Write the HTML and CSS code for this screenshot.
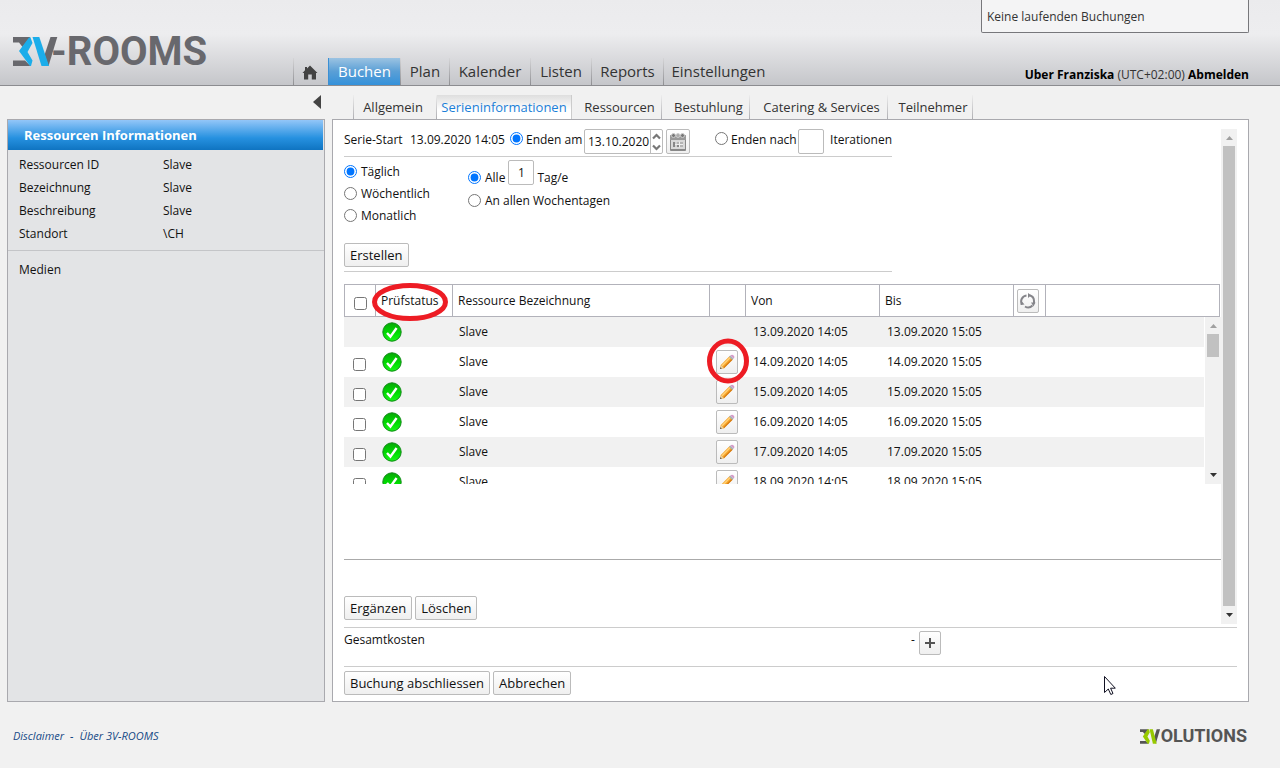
FILE: index.html
```html
<!DOCTYPE html>
<html lang="de">
<head>
<meta charset="utf-8">
<title>3V-ROOMS</title>
<link rel="stylesheet" href="styles.css">
</head>
<body>
<svg class="sprite" aria-hidden="true">
  <defs>
    <linearGradient id="green" x1="0" y1="0" x2="0" y2="1"><stop offset="0" stop-color="#08a808"/><stop offset=".55" stop-color="#00dc00"/><stop offset="1" stop-color="#18f818"/></linearGradient>
  </defs>
  <symbol id="ok" viewBox="0 0 20 20"><circle cx="10" cy="10" r="9.2" fill="url(#green)" stroke="#118a18" stroke-width="1"/><path d="M5 11l3.4 3.6L14.6 6" fill="none" stroke="#fff" stroke-width="2.4"/></symbol>
  <symbol id="pencil" viewBox="0 0 16 16"><path d="M1 15l.8-4L11 1.800l3.200 3L5 14.200z" fill="#f7a428"/><path d="M2.500 11.300L11 2.800l1 1-8.500 8.500z" fill="#ffd27a"/><path d="M4.200 13.400l8.600-8.600.9.900L5 14.200z" fill="#d67c14"/><path d="M1 15l.8-4 3.200 3.200z" fill="#e9cf9f"/><path d="M1 15l.4-1.800 1.400 1.400z" fill="#444"/><path d="M10 2.800l1.400-1.300L14.600 4.600 13.200 6z" fill="#a9b3b8"/><path d="M11.400 1.500Q13 0 14.600 1.400T14.600 4.600z" fill="#d59bc9"/></symbol>
  <symbol id="up" viewBox="0 0 7 4"><path d="M0 4L3.500 0 7 4z"/></symbol>
  <symbol id="down" viewBox="0 0 7 4"><path d="M0 0h7L3.500 4z"/></symbol>
</svg>

<header class="top">
  <a class="logo" href="#"><svg class="logo-mark" viewBox="0 0 45 29" aria-hidden="true"><path d="M0 0h17.500L9.500 10 6 5.500H0zM0 23.500h12l5.500 5.500H0z" fill="#68686d"/><path d="M16 .5h1.500l2 5.500-5 9 5 8.500-1.500 5.500h-1L6 14z" fill="#1badea"/><path d="M37.500 0h6.800L35.500 29l-4-11z" fill="#68686d"/><path d="M19.500 0h6.800L36 29h-7.500z" fill="#1badea"/></svg><span>-ROOMS</span></a>
  <nav class="menu">
    <a href="#" class="home" aria-label="Start"><svg width="16" height="15" viewBox="0 0 16 15"><path d="M8 .5L15.500 8H14v6.500H9.800V9.500H6.200v5H2V8H.5L3 5.300V2h2v1.500z" fill="#434343"/></svg></a>
    <a href="#" class="active">Buchen</a>
    <a href="#">Plan</a>
    <a href="#">Kalender</a>
    <a href="#">Listen</a>
    <a href="#">Reports</a>
    <a href="#">Einstellungen</a>
  </nav>
  <div class="account">
    <div class="bookings">Keine laufenden Buchungen</div>
    <div class="user"><a href="#">Uber Franziska</a> (UTC+02:00) <a href="#">Abmelden</a></div>
  </div>
</header>

<div class="subbar">
  <button class="collapse" aria-label="Einklappen"><svg width="8" height="14" viewBox="0 0 8 14"><path d="M8 0v14L0 7z" fill="#444"/></svg></button>
  <nav class="tabs">
    <a href="#">Allgemein</a>
    <a href="#" class="active">Serieninformationen</a>
    <a href="#">Ressourcen</a>
    <a href="#">Bestuhlung</a>
    <a href="#">Catering &amp; Services</a>
    <a href="#">Teilnehmer</a>
  </nav>
</div>

<div class="columns">
  <aside class="side">
    <h2>Ressourcen Informationen</h2>
    <dl>
      <dt>Ressourcen ID</dt><dd>Slave</dd>
      <dt>Bezeichnung</dt><dd>Slave</dd>
      <dt>Beschreibung</dt><dd>Slave</dd>
      <dt>Standort</dt><dd>\CH</dd>
    </dl>
    <div class="media">Medien</div>
  </aside>

  <main class="panel">
    <div class="scroller">
      <div class="content">
        <form class="series">
          <div class="range">
            <span>Serie-Start</span><span>13.09.2020 14:05</span>
            <label class="opt"><input type="radio" name="end" checked>Enden am</label>
            <div class="date">
              <input type="text" value="13.10.2020" aria-label="Enddatum">
              <span class="spin"><svg viewBox="0 0 11 20" width="11" height="20"><path d="M2 6.500L5.500 3 9 6.500M2 13.500L5.500 17 9 13.500" fill="none" stroke="#777" stroke-width="2.200"/></svg></span>
            </div>
            <button type="button" class="icon-btn" aria-label="Kalender"><svg width="16" height="18" viewBox="0 0 16 18"><path d="M.5 2.500h15v15H.5z" fill="#d9d9d9" stroke="#888"/><path d="M0 3h16v4H0z" fill="#999"/><path d="M1 17h14" stroke="#888" stroke-width="2"/><circle cx="3.500" cy="2.500" r="2" fill="#777" stroke="#ccc"/><circle cx="8" cy="2.500" r="2" fill="#aaa" stroke="#ccc"/><circle cx="12.500" cy="2.500" r="2" fill="#777" stroke="#ccc"/><path d="M3 9h10v5H3z" fill="#b4b4b4"/><path d="M6 8.500v6M9.500 8.500v6M3 11.500h10" stroke="#eee"/><path d="M3 9h2v5H3zM7 12h2v2H7z" fill="#888"/></svg></button>
            <label class="opt after"><input type="radio" name="end">Enden nach</label>
            <input class="num" id="iter" type="text">
            <label for="iter" class="iter">Iterationen</label>
          </div>
          <div class="rules">
            <div class="stack">
              <label class="opt"><input type="radio" name="freq" checked>Täglich</label>
              <label class="opt"><input type="radio" name="freq">Wöchentlich</label>
              <label class="opt"><input type="radio" name="freq">Monatlich</label>
            </div>
            <div class="every">
              <div class="line"><label class="opt"><input type="radio" name="every" checked>Alle</label><input class="num" id="days" type="text" value="1"><label for="days">Tag/e</label></div>
              <label class="opt"><input type="radio" name="every">An allen Wochentagen</label>
            </div>
          </div>
          <button type="button" class="btn">Erstellen</button>
        </form>

        <div class="listing">
          <table>
            <thead>
              <tr>
                <th><input type="checkbox" aria-label="Alle auswählen"></th>
                <th class="mark">Prüfstatus<svg class="ring wide" viewBox="0 0 76 38"><ellipse cx="38" cy="19" rx="35.500" ry="16.500"/></svg></th>
                <th>Ressource Bezeichnung</th>
                <th></th>
                <th>Von</th>
                <th>Bis</th>
                <th class="tool"><button type="button" class="icon-btn" aria-label="Aktualisieren"><svg width="16" height="18" viewBox="0 0 16 18" fill="none" stroke="#85858a" stroke-width="2"><path d="M9.500 3.200A6 6 0 0 1 14 9v2.500M12.500 13.500A6 6 0 0 1 5 14.500M2 12.500A6 6 0 0 1 6.500 3.500"/><path d="M8 1v5l3-2.700zM11 10.500h4.500l-2 4zM.5 13l1-4 3 3.500z" fill="#85858a" stroke="none"/></svg></button></th>
                <th></th>
              </tr>
            </thead>
            <tbody>
              <tr><td></td><td><svg class="ok"><use href="#ok"/></svg></td><td>Slave</td><td></td><td>13.09.2020 14:05</td><td>13.09.2020 15:05</td></tr>
              <tr><td><input type="checkbox" aria-label="14.09.2020"></td><td><svg class="ok"><use href="#ok"/></svg></td><td>Slave</td><td class="mark"><button type="button" class="icon-btn" aria-label="Bearbeiten"><svg width="16" height="16"><use href="#pencil"/></svg></button><svg class="ring round" viewBox="0 0 42 46"><ellipse cx="21" cy="23" rx="18.500" ry="20"/></svg></td><td>14.09.2020 14:05</td><td>14.09.2020 15:05</td></tr>
              <tr><td><input type="checkbox" aria-label="15.09.2020"></td><td><svg class="ok"><use href="#ok"/></svg></td><td>Slave</td><td><button type="button" class="icon-btn" aria-label="Bearbeiten"><svg width="16" height="16"><use href="#pencil"/></svg></button></td><td>15.09.2020 14:05</td><td>15.09.2020 15:05</td></tr>
              <tr><td><input type="checkbox" aria-label="16.09.2020"></td><td><svg class="ok"><use href="#ok"/></svg></td><td>Slave</td><td><button type="button" class="icon-btn" aria-label="Bearbeiten"><svg width="16" height="16"><use href="#pencil"/></svg></button></td><td>16.09.2020 14:05</td><td>16.09.2020 15:05</td></tr>
              <tr><td><input type="checkbox" aria-label="17.09.2020"></td><td><svg class="ok"><use href="#ok"/></svg></td><td>Slave</td><td><button type="button" class="icon-btn" aria-label="Bearbeiten"><svg width="16" height="16"><use href="#pencil"/></svg></button></td><td>17.09.2020 14:05</td><td>17.09.2020 15:05</td></tr>
              <tr><td><input type="checkbox" aria-label="18.09.2020"></td><td><svg class="ok"><use href="#ok"/></svg></td><td>Slave</td><td><button type="button" class="icon-btn" aria-label="Bearbeiten"><svg width="16" height="16"><use href="#pencil"/></svg></button></td><td>18.09.2020 14:05</td><td>18.09.2020 15:05</td></tr>
            </tbody>
          </table>
          <div class="bar list-bar"><svg class="arrow off"><use href="#up"/></svg><div class="track"><div class="thumb"></div></div><svg class="arrow"><use href="#down"/></svg></div>
        </div>

        <div class="actions">
          <button type="button" class="btn">Ergänzen</button>
          <button type="button" class="btn">Löschen</button>
        </div>
      </div>
      <div class="bar page-bar"><svg class="arrow off"><use href="#up"/></svg><div class="track"><div class="thumb"></div></div><svg class="arrow"><use href="#down"/></svg></div>
    </div>
    <div class="costs">
      <span>Gesamtkosten</span><span class="sum">-</span>
      <button type="button" class="icon-btn" aria-label="Details"><svg width="10" height="10" viewBox="0 0 10 10"><path d="M5 0v10M0 5h10" stroke="#555" stroke-width="2"/></svg></button>
    </div>
    <div class="finish">
      <button type="button" class="btn">Buchung abschliessen</button>
      <button type="button" class="btn">Abbrechen</button>
    </div>
    <svg class="pointer" viewBox="0 0 12 20" aria-hidden="true"><path d="M.5.500v16l3.800-3.500 2.500 5.500 2.200-1-2.400-5.300h4.700z" fill="#fff" stroke="#111122"/></svg>
  </main>
</div>

<footer class="foot">
  <div class="links"><a href="#">Disclaimer</a><span>-</span><a href="#">Über 3V-ROOMS</a></div>
  <a class="maker" href="#"><svg class="maker-mark" viewBox="0 0 22 15" aria-hidden="true"><path d="M0 0h9L5 5 3 2.800H0zM0 12.200h6L9 15H0z" fill="#555"/><path d="M8 0h1.300l1 3-2.500 4.500L10.300 12l-1 3H8L3 7.500z" fill="#97c900"/><path d="M17.500 0H21l-4.500 15-2-6z" fill="#555"/><path d="M10 0h3.500l4 15h-4z" fill="#97c900"/></svg><span>OLUTIONS</span></a>
</footer>
</body>
</html>
```

FILE: styles.css
```css
* { box-sizing: border-box; }

body {
  margin: 0;
  min-height: 100vh;
  background: #f1f1f1;
  color: #111;
  font: 12px/18px "Open Sans", "Noto Sans", sans-serif;
}

a { color: inherit; text-decoration: none; }
svg { display: block; flex: none; }
.sprite { position: absolute; width: 0; height: 0; }
button, input { font: inherit; color: inherit; }
button { cursor: pointer; }

/* Header */
.top {
  display: flex;
  height: 86px;
  padding: 0 31px 0 13px;
  border-bottom: 1px solid #8c8c90;
  background: linear-gradient(#ebebed, #ededef 34px, #c5c6ca 85px);
}
.logo {
  display: flex;
  align-items: center;
  width: 280px;
  height: 31px;
  margin-top: 36px;
  color: #68686d;
  font: bold 40px/30px Roboto, sans-serif;
}
.logo-mark { width: 45px; height: 29px; margin-right: -7px; }

.menu {
  display: grid;
  grid-template-columns: 35px 72px 49px 81px 61px 72px 110px;
  align-self: flex-end;
  height: 27px;
}
.menu a {
  display: flex;
  align-items: center;
  justify-content: center;
  padding-bottom: 2px;
  border-left: 1px solid;
  border-image: linear-gradient(#d8d8da, #8c8c90) 1;
  color: #333;
  font-size: 15px;
}
.menu .active {
  border-image: none;
  border-color: #3b8fd4;
  background: linear-gradient(#9bc3e2, #5a9fd6 50%, #3491da);
  color: #fff;
}
.menu .home { padding: 2px 2px 0 0; }

.account {
  display: flex;
  flex-direction: column;
  justify-content: space-between;
  align-items: flex-end;
  margin-left: auto;
  padding-bottom: 1px;
  color: #333;
}
.bookings {
  width: 268px;
  height: 33px;
  padding: 8px 5px;
  border: 1px solid #77777b;
  border-top: 0;
  border-radius: 0 0 2px 2px;
  background: #f4f4f5;
}
.user a { color: #000; font-weight: bold; }

/* Tabs */
.subbar { display: flex; height: 33px; padding-right: 31px; }
.collapse {
  width: 353px;
  height: 33px;
  padding: 0 32px 2px 0;
  border: 0;
  background: none;
}
.collapse svg { margin-left: auto; }
.tabs {
  display: grid;
  grid-template-columns: 84px 135px 90px 88px 138px 85px;
  height: 24px;
  margin-top: 9px;
}
.tabs a {
  display: flex;
  align-items: center;
  justify-content: center;
  padding: 0 0 2px 6px;
  border-right: 1px solid;
  border-image: linear-gradient(#f0f0f0, #a9a9ad) 1;
  color: #333;
  font-size: 13px;
}
.tabs a:first-child { border-left: 1px solid; padding: 0 4px 2px 0; }
.tabs .active {
  position: relative;
  height: 25px;
  padding: 0 0 2px;
  border-image: none;
  border-color: #ccc;
  background: linear-gradient(#dedede, #fff 60%);
  color: #1b7fd8;
}

/* Body columns */
.columns {
  display: grid;
  grid-template-columns: 318px minmax(0, 1fr);
  gap: 7px;
  padding: 0 31px 0 7px;
}
.side, .panel { border: 1px solid #a9a9ae; }
.side { background: #e3e4e6; }
.side h2 {
  height: 30px;
  margin: 0 1px 0 0;
  padding-left: 16px;
  background: linear-gradient(#93c6f8, #2691e0 60%, #0f74c1);
  color: #fff;
  font-size: 13px;
  line-height: 30px;
}
.side dl {
  display: grid;
  grid-template-columns: 144px 1fr;
  row-gap: 5px;
  margin: 0;
  padding: 6px 11px 7px;
  border-bottom: 1px solid #c4c5c8;
}
.side dd { margin: 0; }
.media { padding: 10px 11px; }

.panel {
  position: relative;
  padding: 9px 11px 6px;
  background: #fff;
}

/* Shared controls */
.btn, .icon-btn {
  height: 24px;
  border: 1px solid #bbb;
  border-radius: 2px;
  background: linear-gradient(#fff, #efefef);
}
.btn { display: block; padding: 0 5px; font-size: 13px; }
.icon-btn {
  display: inline-flex;
  align-items: center;
  justify-content: center;
  width: 22px;
  padding: 0;
}
.opt { display: flex; align-items: center; white-space: nowrap; }
.opt input { flex: none; width: 13px; height: 13px; margin: 0 3px 3px 0; }
.num {
  width: 26px;
  height: 25px;
  padding: 0;
  border: 1px solid #bbb;
  border-radius: 2px;
  text-align: center;
}

/* Series form */
.scroller { display: flex; }
.content { flex: 1; min-width: 0; }
.series { width: 548px; padding-bottom: 4px; border-bottom: 1px solid #ccc; }
.range {
  display: grid;
  grid-template-columns: 66px 100px 74px 79px 27px 108px 26px 1fr;
  align-items: start;
  height: 28px;
  border-bottom: 1px solid #ccc;
}
.range > span, .range > label { padding-top: 2px; }
.range .date { display: flex; height: 25px; border: 1px solid #bbb; border-radius: 2px; }
.range .date input { flex: 1; min-width: 0; padding: 0 0 0 3px; border: 0; background: none; }
.range .icon-btn { justify-self: end; width: 24px; height: 25px; }
.spin { border-left: 1px solid #bbb; padding: 2px 0; }
.range .after { padding-left: 25px; }
.range .iter { justify-self: end; }
.rules { display: flex; height: 86px; padding-top: 3px; }
.stack { display: grid; row-gap: 4px; align-content: start; width: 124px; padding-top: 3px; }
.every { display: grid; align-content: start; row-gap: 5px; }
.line { display: flex; align-items: flex-start; height: 27px; }
.line label { padding-top: 9px; }
.line .num { margin: 0 3px; }
.stack .opt input, .every .opt input { margin: 0 4px 2px 0; }
.every > .opt, .stack .opt { height: 18px; }

/* Listing */
.listing {
  position: relative;
  height: 276px;
  margin-top: 12px;
  border-bottom: 1px solid #aaa;
}
table, thead, tbody { display: block; }
tr { display: grid; grid-template-columns: 31px 77px 257px 36px 134px 134px 32px 1fr; }
thead tr {
  position: relative;
  z-index: 2;
  height: 33px;
  margin-right: 1px;
  border: 1px solid #b2b2ba;
}
th, td { display: flex; align-items: center; padding: 0 7px; text-align: left; white-space: nowrap; }
th { padding: 0 5px; border-right: 1px solid #b2b2ba; font-weight: normal; }
th:last-child { border-right: 0; }
th.tool { padding: 0 3px; }
th:first-child, td:first-child { padding: 5px 0 0 9px; }
td:nth-child(4) { justify-content: center; padding: 0; }
td:nth-child(n+5) { padding-left: 8px; }
th input, td input { width: 13px; height: 13px; margin: 0; }
tbody { height: 167px; margin-right: 17px; overflow: hidden; }
tbody tr { height: 30px; }
tbody tr:nth-child(odd) { background: #f1f1f1; }
.ok { width: 20px; height: 20px; }
.mark { position: relative; }
.ring { position: absolute; fill: none; stroke: #ed1c24; stroke-width: 5; }
.wide { left: -4px; top: -2px; width: 76px; height: 38px; }
.round { left: -2px; top: -9px; width: 42px; height: 46px; }

/* Scrollbars */
.bar { display: flex; flex-direction: column; align-items: center; width: 16px; padding: 7px 0; background: #f1f1f1; }
.arrow { width: 7px; height: 4px; fill: #333; }
.arrow.off { fill: #a0a0a0; }
.track { flex: 1; width: 12px; padding: 6px 0 7px; }
.thumb { height: 100%; background: #c1c1c1; }
.list-bar { position: absolute; top: 33px; right: 0; height: 167px; }
.list-bar .thumb { height: 23px; }

.actions { display: flex; gap: 3px; padding: 36px 0 4px; }
.costs {
  display: flex;
  align-items: flex-start;
  height: 40px;
  margin-top: 3px;
  padding-top: 3px;
  border: solid #ccc;
  border-width: 1px 0;
}
.costs .sum { width: 490px; margin-right: 4px; text-align: right; }
.finish { display: flex; gap: 3px; padding-top: 4px; }
.pointer { position: absolute; right: 132px; bottom: 5px; width: 12px; height: 20px; }

/* Footer */
.foot {
  display: flex;
  align-items: center;
  justify-content: space-between;
  padding: 19px 33px 16px 13px;
}
.links { display: flex; gap: 6px; color: #174a86; font-size: 11px; font-style: italic; }
.maker { display: flex; align-items: center; color: #555; font: bold 18px/30px Roboto, sans-serif; }
.maker-mark { width: 21px; height: 15px; }
```
